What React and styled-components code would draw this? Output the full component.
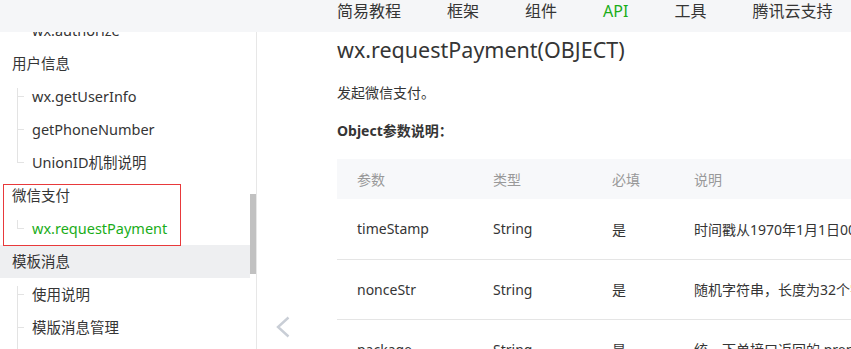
import React from "react";
import styled, { createGlobalStyle } from "styled-components";

const GlobalStyle = createGlobalStyle`
  html, body { margin: 0; padding: 0; background: #fff; overflow: hidden; }
  body {
    font-family: "Noto Sans", "Noto Sans CJK SC", sans-serif;
    color: #353535;
  }
  * { box-sizing: border-box; }
`;

const Page = styled.div`
  width: 851px;
  height: 349px;
  overflow: hidden;
  display: flex;
  flex-direction: column;
`;

const Header = styled.header`
  flex: none;
  height: 32px;
  background: #f5f6f8;
  display: flex;
  align-items: flex-start;
  gap: 46px;
  padding-left: 337px;
`;

const NavItem = styled.a`
  font-size: 16px;
  line-height: 22px;
  color: ${(p) => (p.$active ? "#1aad19" : "#353535")};
  text-decoration: none;
  white-space: nowrap;
`;

const Body = styled.div`
  flex: 1;
  display: flex;
  min-height: 0;
`;

const Sidebar = styled.aside`
  flex: none;
  width: 257px;
  border-right: 1px solid #e7e7e7;
  position: relative;
  overflow: hidden;
`;

const SideList = styled.div`
  width: 250px;
  margin-top: -18px;
`;

const Section = styled.div`
  height: 33px;
  line-height: 33px;
  padding-left: 12px;
  font-size: 14.5px;
  color: #353535;
  background: ${(p) => (p.$hover ? "#eeeff1" : "transparent")};
`;

const Child = styled.div`
  position: relative;
  height: 33px;
  line-height: 33px;
  padding-left: 32px;
  font-size: 14.5px;
  color: ${(p) => (p.$active ? "#1aad19" : "#353535")};
  white-space: nowrap;

  &::before {
    content: "";
    position: absolute;
    left: 17px;
    width: 1px;
    background: #e3e3e3;
    top: ${(p) => (p.$first ? "8px" : "0")};
    ${(p) => (p.$last ? "height: " + (p.$first ? "9px" : "17px") + ";" : "bottom: 0;")}
  }
  &::after {
    content: "";
    position: absolute;
    left: 18px;
    top: 16px;
    width: 6px;
    height: 1px;
    background: #e3e3e3;
  }
`;

const PayGroup = styled.div`
  position: relative;
  &::after {
    content: "";
    position: absolute;
    left: 3px;
    top: 5px;
    width: 176px;
    bottom: -1px;
    border: 1px solid #e8393b;
    pointer-events: none;
    z-index: 1;
  }
`;

const Scrollbar = styled.div`
  position: absolute;
  right: 0;
  top: 162px;
  width: 6px;
  height: 80px;
  background: #c1c1c1;
`;

const Main = styled.main`
  flex: 1;
  min-width: 0;
  position: relative;
  overflow: hidden;
  padding-left: 80px;
`;

const Title = styled.h1`
  margin: 0;
  font-size: 21.5px;
  line-height: 36px;
  font-weight: normal;
  color: #353535;
  white-space: nowrap;
`;

const Desc = styled.p`
  margin: 13px 0 0;
  font-size: 14px;
  line-height: 24px;
  color: #353535;
`;

const SubTitle = styled.p`
  margin: 14px 0 0;
  font-size: 14px;
  line-height: 24px;
  font-weight: bold;
  color: #353535;
`;

const Table = styled.table`
  margin-top: 16px;
  border-collapse: collapse;
  table-layout: fixed;
  width: 620px;
  font-size: 14px;
`;

const HeadRow = styled.tr`
  background: #f7f8fa;
`;

const Th = styled.th`
  height: 40px;
  padding: 0 0 0 20px;
  text-align: left;
  font-weight: normal;
  color: #999;
  white-space: nowrap;
`;

const Row = styled.tr`
  border-bottom: 1px solid #e5e5e5;
`;

const Td = styled.td`
  height: 60px;
  padding: 0 0 0 20px;
  color: #353535;
  white-space: nowrap;
  overflow: hidden;
`;

const BackArrow = styled.svg`
  position: absolute;
  left: 19px;
  top: 284px;
  width: 14px;
  height: 22px;
`;

const rows = [
  ["timeStamp", "String", "是", "时间戳从1970年1月1日00:00:00至今的秒数,即当前的时间"],
  ["nonceStr", "String", "是", "随机字符串，长度为32个字符以下。"],
  ["package", "String", "是", "统一下单接口返回的 prepay_id 参数值，提交格式如：prepay_id=*"],
];

export default function App() {
  return (
    <>
      <GlobalStyle />
      <Page>
        <Header>
          <NavItem>简易教程</NavItem>
          <NavItem>框架</NavItem>
          <NavItem>组件</NavItem>
          <NavItem $active>API</NavItem>
          <NavItem>工具</NavItem>
          <NavItem>腾讯云支持</NavItem>
        </Header>
        <Body>
          <Sidebar>
            <SideList>
              <Child $last>wx.authorize</Child>
              <Section>用户信息</Section>
              <Child $first>wx.getUserInfo</Child>
              <Child>getPhoneNumber</Child>
              <Child $last>UnionID机制说明</Child>
              <PayGroup>
                <Section>微信支付</Section>
                <Child $first $last $active>wx.requestPayment</Child>
              </PayGroup>
              <Section $hover>模板消息</Section>
              <Child $first>使用说明</Child>
              <Child>模版消息管理</Child>
              <Child>发送模板消息</Child>
            </SideList>
            <Scrollbar />
          </Sidebar>
          <Main>
            <Title>wx.requestPayment(OBJECT)</Title>
            <Desc>发起微信支付。</Desc>
            <SubTitle>Object参数说明：</SubTitle>
            <Table>
              <colgroup>
                <col style={{ width: 136 }} />
                <col style={{ width: 119 }} />
                <col style={{ width: 82 }} />
                <col />
              </colgroup>
              <thead>
                <HeadRow>
                  <Th>参数</Th>
                  <Th>类型</Th>
                  <Th>必填</Th>
                  <Th>说明</Th>
                </HeadRow>
              </thead>
              <tbody>
                {rows.map((r) => (
                  <Row key={r[0]}>
                    {r.map((c, i) => (
                      <Td key={i}>{c}</Td>
                    ))}
                  </Row>
                ))}
              </tbody>
            </Table>
            <BackArrow viewBox="0 0 14 22">
              <polyline points="12.5,1.5 2,11 12.5,20.5" fill="none" stroke="#c9ced6" strokeWidth="2.4" />
            </BackArrow>
          </Main>
        </Body>
      </Page>
    </>
  );
}
